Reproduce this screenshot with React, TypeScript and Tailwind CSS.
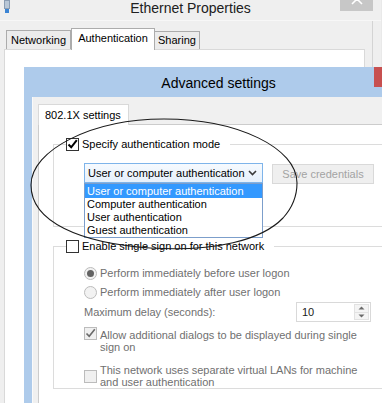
import React from "react";

function CheckBox({ checked, disabled }: { checked?: boolean; disabled?: boolean }) {
  return (
    <span
      className={
        disabled
          ? "relative flex h-[13px] w-[13px] shrink-0 items-center justify-center border border-[#bcbcbc] bg-[#f0f0f0]"
          : "relative flex h-[13px] w-[13px] shrink-0 items-center justify-center border border-[#333333] bg-white"
      }
    >
      {checked && (
        <svg width="11" height="11" viewBox="0 0 11 11" className="overflow-visible">
          <path
            d="M1.5 5.5 L4.2 8.3 L9.8 1.2"
            fill="none"
            stroke={disabled ? "#6a6a6a" : "#000000"}
            strokeWidth={disabled ? 1.6 : 2}
          />
        </svg>
      )}
    </span>
  );
}

function Radio({ checked }: { checked?: boolean }) {
  return (
    <span className="flex h-[13px] w-[13px] shrink-0 items-center justify-center rounded-full border border-[#bcbcbc] bg-[#f2f2f2]">
      {checked && <span className="h-[7px] w-[7px] rounded-full bg-[#626262]" />}
    </span>
  );
}

function NetIcon() {
  return (
    <svg width="8" height="14" viewBox="0 0 8 14">
      <rect x="1" y="0" width="6" height="9" fill="#8b9db2" />
      <rect x="2" y="1" width="4" height="7" fill="#b9c7d6" />
      <rect x="2" y="9" width="4" height="4" fill="#3b84d4" />
    </svg>
  );
}

export default function App() {
  return (
    <div className="relative h-[403px] w-[382px] overflow-hidden bg-[#e9e9e9] font-['Liberation_Sans',Arial,sans-serif] text-[11px] leading-[13px] text-black">
      {/* Ethernet Properties window */}
      <div className="flex h-full w-[381px] flex-col bg-[#efefef]">
        <div className="grid h-[21px] shrink-0 grid-cols-[1fr_auto_1fr] border-b border-[#f7f7f7]">
          <div className="pl-[3px]">
            <NetIcon />
          </div>
          <div className="text-[14px] leading-[16px] text-[#202020]">Ethernet Properties</div>
          <div className="flex justify-end pr-[8px]">
            <div className="h-[11px] w-[33px] bg-[#c7c7c7]">
              <svg width="33" height="11" viewBox="0 0 33 11">
                <path d="M12 -6 L22 4 M22 -6 L12 4" stroke="#ffffff" strokeWidth="1.6" fill="none" />
              </svg>
            </div>
          </div>
        </div>
        <div className="w-[373px] flex-1 border-r border-[#d4d4d4] pl-[4px] pt-[7px]">
          <div className="flex h-[21px] items-end pl-[2px]">
            <div className="flex h-[19px] w-[65px] items-center justify-center border border-b-0 border-[#acacac] bg-[#ececec]">
              Networking
            </div>
            <div className="relative z-10 mb-[-1px] flex h-[22px] w-[84px] items-center justify-center border border-b-0 border-[#acacac] bg-white pb-[2px]">
              Authentication
            </div>
            <div className="ml-[-1px] flex h-[18px] w-[46px] items-center justify-center border border-b-0 border-[#acacac] bg-[#ececec]">
              Sharing
            </div>
          </div>
          <div className="h-[400px] w-[361px] border border-[#d9d9d9] bg-white" />
        </div>
      </div>

      {/* Advanced settings dialog */}
      <div className="absolute left-[24px] top-[67px] flex h-[400px] w-[389px] flex-col bg-[#aecbeb]">
        <div className="grid h-[30px] shrink-0 grid-cols-[1fr_auto_1fr]">
          <div />
          <div className="pt-[8px] text-[14px] leading-[16px] text-black">Advanced settings</div>
          <div className="flex justify-end pr-[8px]">
            <div className="h-[20px] w-[31px] bg-[#c75050]" />
          </div>
        </div>
        <div className="ml-[8px] flex-1 border-l border-[#fafafa] bg-[#f0f0f0] pl-[5px] pt-[7px]">
          <div className="flex h-[20px]">
            <div className="relative z-10 mb-[-1px] flex h-[21px] w-[91px] items-center border border-b-0 border-[#d9d9d9] bg-white pl-[6px]">
              802.1X settings
            </div>
          </div>
          <div className="h-[400px] border border-[#cccccc] bg-white pl-[14px] pt-[13px]">
            {/* Group 1 */}
            <fieldset className="w-[400px] border border-[#dcdcdc]">
              <legend className="ml-[12px] pr-[10px]">
                <div className="flex h-[13px] items-center gap-[3px]">
                  <CheckBox checked />
                  <span className="whitespace-nowrap">Specify authentication mode</span>
                </div>
              </legend>
              <div className="h-[75px] pl-[30px] pt-[12px]">
                <div className="flex">
                  <div className="relative h-[20px] w-[179px]">
                    <div className="flex h-[20px] w-[179px] items-center border border-[#7eb4ea] bg-gradient-to-b from-[#f6fafe] to-[#e6f0fb] pl-[3px]">
                      <span className="flex-1 whitespace-nowrap">User or computer authentication</span>
                      <svg width="9" height="6" viewBox="0 0 9 6" className="mr-[5px]">
                        <path d="M1 1 L4.5 4.5 L8 1" fill="none" stroke="#3a3a3a" strokeWidth="1.6" />
                      </svg>
                    </div>
                    <div className="absolute left-0 top-[20px] z-20 w-[179px] border border-[#7c9ecb] bg-white">
                      <div className="h-[14px] whitespace-nowrap bg-[#3399ff] pl-[2px] leading-[14px] text-white">
                        User or computer authentication
                      </div>
                      <div className="h-[13px] whitespace-nowrap pl-[2px] leading-[13px]">Computer authentication</div>
                      <div className="h-[13px] whitespace-nowrap pl-[2px] leading-[13px]">User authentication</div>
                      <div className="h-[13px] whitespace-nowrap pl-[2px] leading-[13px]">Guest authentication</div>
                    </div>
                  </div>
                  <div className="ml-[9px] mt-[1px] flex h-[20px] w-[102px] items-center justify-center border border-[#d9d9d9] bg-[#efefef] text-[#a3a3a3]">
                    Save credentials
                  </div>
                </div>
              </div>
            </fieldset>

            {/* Group 2 */}
            <fieldset className="mt-[13px] w-[400px] border border-[#dcdcdc]">
              <legend className="ml-[12px] pr-[10px]">
                <div className="flex h-[13px] items-center gap-[3px]">
                  <CheckBox />
                  <span className="whitespace-nowrap">Enable single sign on for this network</span>
                </div>
              </legend>
              <div className="pl-[30px] pt-[10px] text-[#707070]">
                <div className="flex h-[20px] items-center gap-[3px]">
                  <Radio checked />
                  <span className="whitespace-nowrap">Perform immediately before user logon</span>
                </div>
                <div className="flex h-[19px] items-center gap-[3px]">
                  <Radio />
                  <span className="whitespace-nowrap">Perform immediately after user logon</span>
                </div>
                <div className="flex h-[20px] items-center">
                  <span className="w-[212px] whitespace-nowrap">Maximum delay (seconds):</span>
                  <div className="flex h-[20px] w-[75px] items-center border border-[#d9d9d9] bg-white">
                    <span className="flex-1 pl-[5px] text-[#1a1a1a]">10</span>
                    <div className="mr-[1px] flex h-[16px] w-[15px] flex-col border border-[#e2e2e2] bg-[#f4f4f4]">
                      <div className="flex flex-1 items-center justify-center">
                        <svg width="7" height="4" viewBox="0 0 7 4">
                          <path d="M0.5 3.5 L3.5 0.5 L6.5 3.5 Z" fill="#6a6a6a" />
                        </svg>
                      </div>
                      <div className="flex flex-1 items-center justify-center border-t border-[#e2e2e2]">
                        <svg width="7" height="4" viewBox="0 0 7 4">
                          <path d="M0.5 0.5 L3.5 3.5 L6.5 0.5 Z" fill="#6a6a6a" />
                        </svg>
                      </div>
                    </div>
                  </div>
                </div>
                <div className="mt-[5px] flex items-start gap-[3px]">
                  <CheckBox checked disabled />
                  <span className="mt-[2px] whitespace-nowrap leading-[12px]">
                    Allow additional dialogs to be displayed during single
                    <br />
                    sign on
                  </span>
                </div>
                <div className="mt-[11px] flex items-center gap-[3px]">
                  <CheckBox disabled />
                  <span className="whitespace-nowrap leading-[12px]">
                    This network uses separate virtual LANs for machine
                    <br />
                    and user authentication
                  </span>
                </div>
              </div>
            </fieldset>
          </div>
        </div>
      </div>

      {/* hand-drawn ellipse annotation */}
      <svg
        className="pointer-events-none absolute left-0 top-0 z-30"
        width="382"
        height="403"
        viewBox="0 0 382 403"
      >
        <path
          d="M297 183 C297 148 238 119 164 119 C92 119 31 150 31 185 C31 222 80 243 150 248 C215 252 262 240 283 218 C293 207 297 195 297 183"
          fill="none"
          stroke="#1a1a1a"
          strokeWidth="1.1"
        />
      </svg>
    </div>
  );
}
